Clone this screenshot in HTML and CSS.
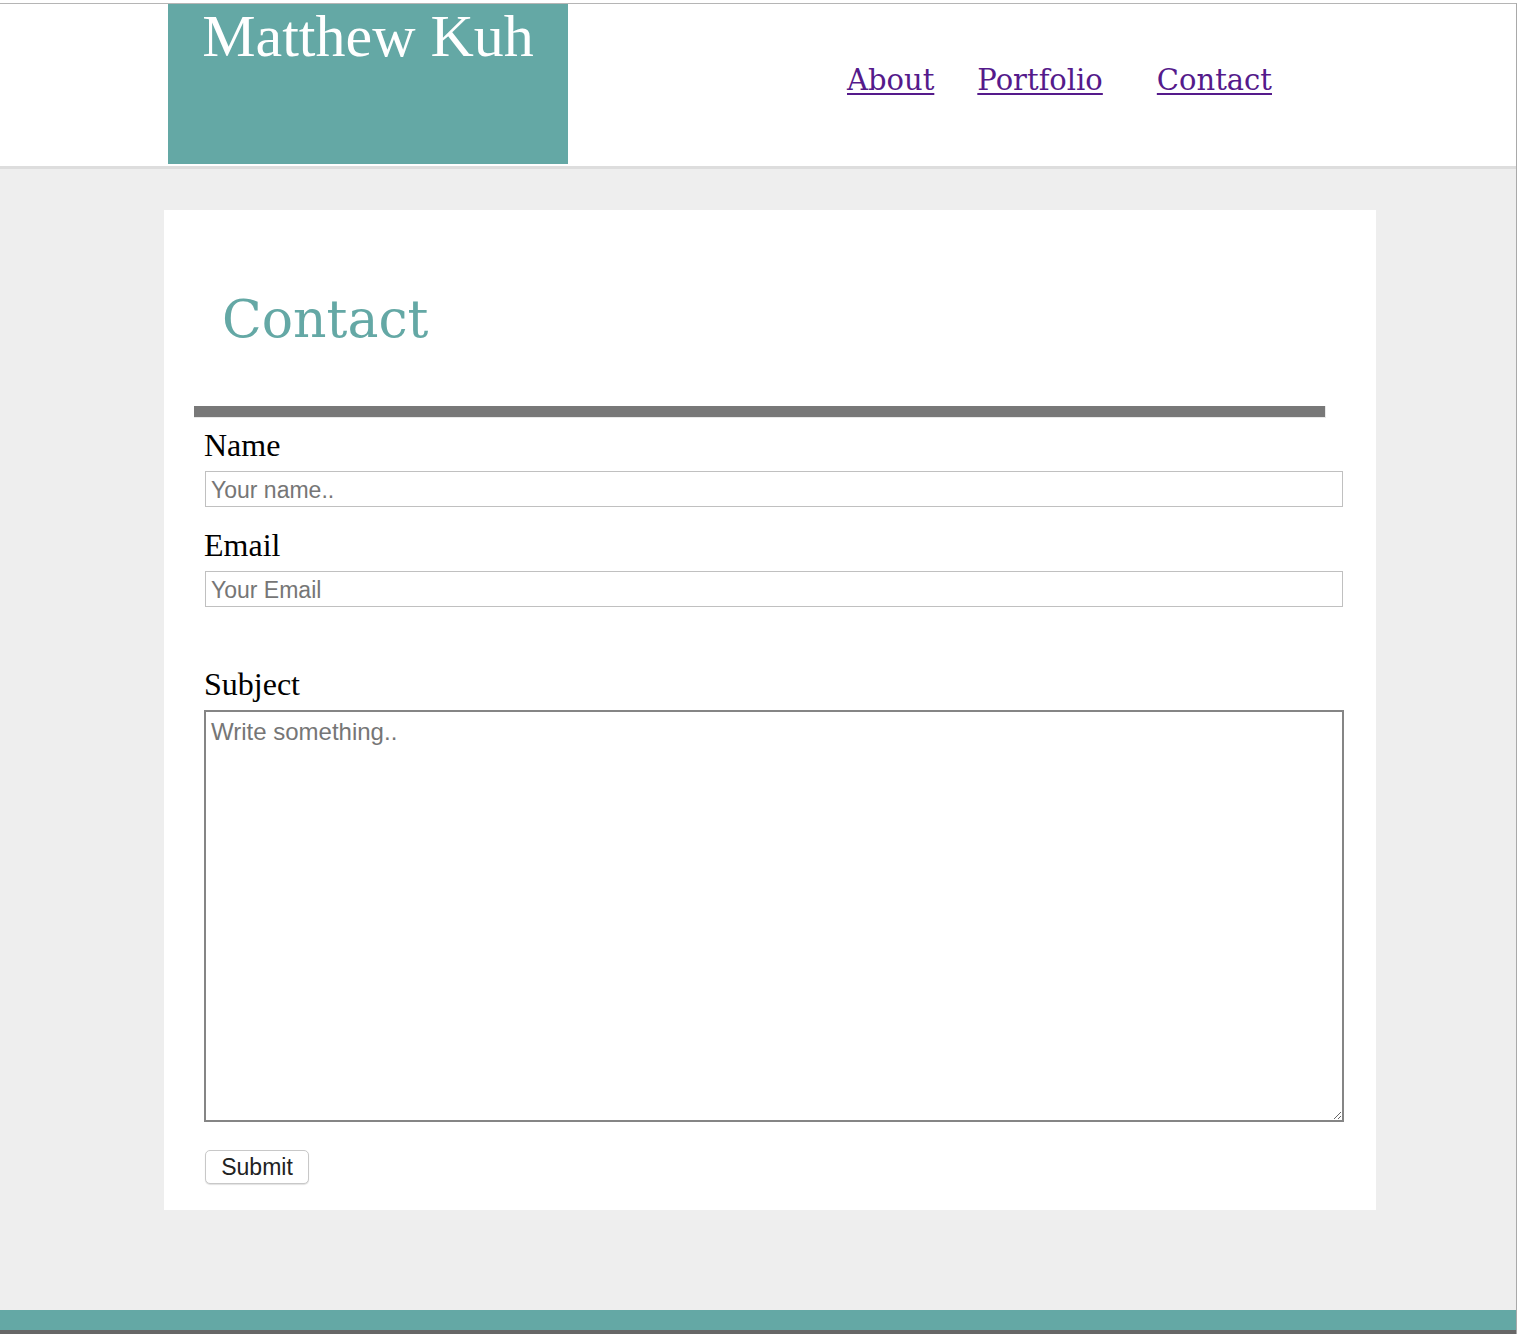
FILE: index.html
```html
<!DOCTYPE html>
<html lang="en">
<head>
<meta charset="utf-8">
<title>Contact - Matthew Kuh</title>
<link rel="stylesheet" href="styles.css">
</head>
<body>
<div class="frame">
  <header class="site-header">
    <div class="logo">Matthew Kuh</div>
    <nav class="nav">
      <a class="nav-link" href="#about">About</a>
      <a class="nav-link" href="#portfolio">Portfolio</a>
      <a class="nav-link nav-link-last" href="#contact">Contact</a>
    </nav>
  </header>
  <main class="main">
    <section class="card">
      <h1 class="title">Contact</h1>
      <div class="rule"></div>
      <form class="form">
        <label class="label" for="name">Name</label>
        <input class="field" id="name" type="text" placeholder="Your name..">
        <label class="label label-email" for="email">Email</label>
        <input class="field" id="email" type="text" placeholder="Your Email">
        <label class="label label-subject" for="subject">Subject</label>
        <textarea class="area" id="subject" placeholder="Write something.."></textarea>
        <button class="submit" type="button">Submit</button>
      </form>
    </section>
  </main>
  <footer class="footer"></footer>
</div>
</body>
</html>
```
FILE: styles.css
```css
html {
  background: #ffffff;
}
body {
  margin: 0;
  padding-top: 3px;
}
.frame {
  width: 1516px;
  border-top: 1px solid #b5b5b5;
  border-right: 1px solid #a9a9a9;
  background: #eeeeee;
}
.site-header {
  display: flex;
  align-items: flex-start;
  height: 162px;
  background: #ffffff;
  border-bottom: 3px solid #dddddd;
  padding-left: 168px;
}
.logo {
  width: 400px;
  height: 160px;
  background: #64a8a5;
  color: #ffffff;
  font-family: "Liberation Serif", "Times New Roman", serif;
  font-size: 60px;
  line-height: 60px;
  text-align: center;
  padding-top: 2px;
  box-sizing: border-box;
}
.nav {
  display: flex;
  gap: 43px;
  margin-left: 279px;
  padding-top: 58px;
}
.nav-link {
  font-family: "DejaVu Serif", Georgia, serif;
  font-size: 29px;
  line-height: 36px;
  color: #551a8b;
  text-decoration: underline;
  text-decoration-thickness: 2px;
  text-underline-offset: 3px;
}
.nav-link-last {
  margin-left: 11px;
}
.main {
  padding: 41px 0 100px 164px;
}
.card {
  width: 1212px;
  background: #ffffff;
  padding: 79px 0 26px 30px;
  box-sizing: border-box;
}
.title {
  margin: 0 0 0 28px;
  font-family: "DejaVu Serif", Georgia, serif;
  font-weight: normal;
  font-size: 52px;
  line-height: 60px;
  color: #64a8a5;
}
.rule {
  margin-top: 57px;
  width: 1131px;
  height: 11px;
  background: #787878;
  border-bottom: 1px solid #e8e8e8;
  border-right: 1px solid #e8e8e8;
}
.form {
  display: flex;
  flex-direction: column;
  align-items: flex-start;
}
.label {
  display: block;
  margin: 9px 0 0 10px;
  font-family: "Liberation Serif", "Times New Roman", serif;
  font-size: 32px;
  line-height: 36px;
  color: #000000;
}
.label-email {
  margin-top: 20px;
}
.label-subject {
  margin-top: 59px;
}
.field {
  margin: 8px 0 0 11px;
  width: 1138px;
  height: 36px;
  box-sizing: border-box;
  border: 1px solid #c0c0c0;
  padding: 2px 5px 0;
  font-family: "Liberation Sans", Arial, sans-serif;
  font-size: 23px;
  color: #333333;
  background: #ffffff;
  outline: none;
}
.area {
  margin: 8px 0 0 10px;
  width: 1140px;
  height: 412px;
  box-sizing: border-box;
  border: 2px solid #858585;
  padding: 6px 5px 4px;
  font-family: "Liberation Sans", Arial, sans-serif;
  font-size: 24px;
  color: #333333;
  background: #ffffff;
  resize: both;
  outline: none;
}
.field::placeholder,
.area::placeholder {
  color: #767676;
}
.submit {
  margin: 28px 0 0 11px;
  width: 104px;
  height: 34px;
  box-sizing: border-box;
  padding: 0;
  border: 1px solid #c8c8c8;
  border-radius: 5px;
  background: #ffffff;
  box-shadow: 0 1px 1px rgba(0, 0, 0, 0.12);
  font-family: "Liberation Sans", Arial, sans-serif;
  font-size: 23px;
  color: #222222;
}
.footer {
  height: 20px;
  background: #64a8a5;
  border-bottom: 4px solid #676767;
}
```
